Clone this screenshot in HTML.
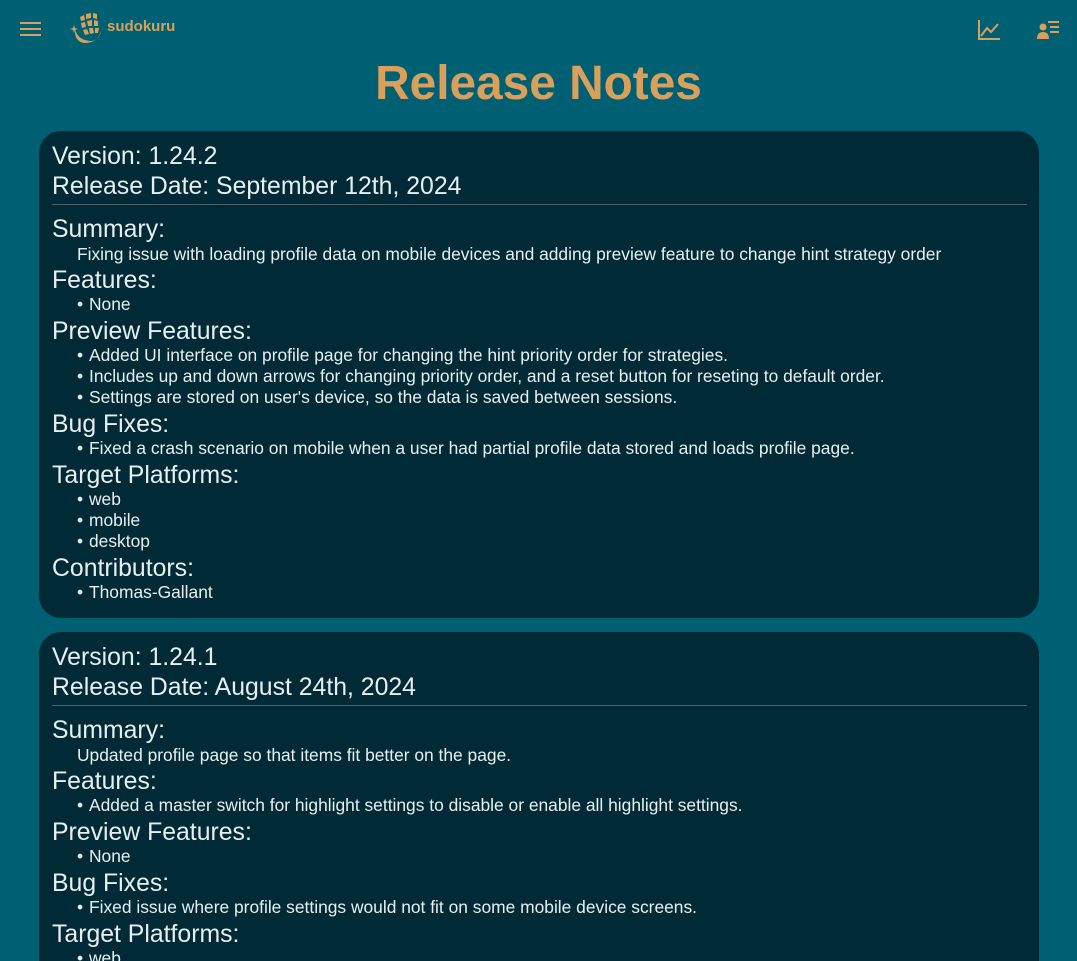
<!DOCTYPE html>
<html><head><meta charset="utf-8"><style>
*{box-sizing:border-box;margin:0;padding:0}
html,body{width:1077px;height:961px;overflow:hidden}
body{background:#006073;font-family:"Liberation Sans",sans-serif;color:#e8eef0;position:relative}
.hdr{position:relative;height:58px}
.t{position:absolute;left:0;right:0;top:56px;text-align:center;color:#d9a05b;font-weight:bold;font-size:47.8px;line-height:56px}
.card{position:absolute;left:39px;width:1000px;background:#002b36;border-radius:22px;padding:11px 12px 14px 13px}
.v{font-size:24.8px;line-height:30px}
.hr{border-top:1px solid #4e6166;margin:2px 0 10px}
.h{font-size:24.8px;line-height:29px;margin-bottom:-1px}
.s{font-size:17.4px;line-height:21px;padding-left:25px;padding-top:1px;margin-bottom:1px}
ul{list-style:none;margin-bottom:2px}
li{font-size:17.4px;line-height:21px;padding-left:37px;position:relative}
li:before{content:"•";position:absolute;left:25px}
</style></head><body>
<div class="hdr">
<svg style="position:absolute;left:20px;top:20px" width="21" height="16" viewBox="0 0 21 16"><rect y="2" width="21" height="2" fill="#d9a05b"/><rect y="8" width="21" height="2" fill="#d9a05b"/><rect y="14" width="21" height="2" fill="#d9a05b"/></svg>
<svg style="position:absolute;left:70px;top:11px" width="34" height="34" viewBox="0 0 34 34" fill="#d9a05b">
<path d="M10 6 L14 4 L15 9 L11 10Z M16 3 L21 2 L21 7 L16 8Z M23 2 L27 3 L27 8 L23 7Z M11 12 L15 11 L16 16 L12 17Z M17 10 L22 9 L22 15 L18 15Z M24 9 L28 10 L28 15 L24 15Z M13 19 L17 18 L19 23 L15 24Z M19 17 L23 17 L24 22 L20 23Z M25 17 L29 17 L28 22 L25 22Z"/>
<path d="M5 18 Q8 30 22 30 Q30 28 31 20 Q28 32 14 32 Q4 30 5 18Z"/>
<path d="M4 14 l1 3 3 1 -3 1 -1 3 -1 -3 -3 -1 3 -1z"/>
</svg>
<div style="position:absolute;left:107px;top:18px;color:#d9a05b;font-weight:bold;font-size:15px">sudokuru</div>
<svg style="position:absolute;left:978px;top:20px" width="22" height="20" viewBox="0 0 22 20" fill="none" stroke="#d9a05b" stroke-width="2"><path d="M1 0V19H22"/><path d="M3 16L9 8L13 12L20 4"/></svg>
<svg style="position:absolute;left:1037px;top:21px" width="23" height="18" viewBox="0 0 23 18" fill="#d9a05b"><circle cx="6" cy="6" r="3.5"/><path d="M0 18Q0 11 6 11Q12 11 12 18Z"/><rect x="11" y="0" width="11" height="2"/><rect x="13" y="5" width="9" height="2"/><rect x="13" y="10" width="9" height="2"/></svg>
</div>
<div class="t">Release Notes</div>
<div class="card" style="top:131px;height:487px">
<div class="v">Version: 1.24.2</div><div class="v">Release Date: September 12th, 2024</div><div class="hr"></div>
<div class="h">Summary:</div><div class="s">Fixing issue with loading profile data on mobile devices and adding preview feature to change hint strategy order</div>
<div class="h">Features:</div><ul><li>None</li></ul>
<div class="h">Preview Features:</div><ul><li>Added UI interface on profile page for changing the hint priority order for strategies.</li><li>Includes up and down arrows for changing priority order, and a reset button for reseting to default order.</li><li>Settings are stored on user's device, so the data is saved between sessions.</li></ul>
<div class="h">Bug Fixes:</div><ul><li>Fixed a crash scenario on mobile when a user had partial profile data stored and loads profile page.</li></ul>
<div class="h">Target Platforms:</div><ul><li>web</li><li>mobile</li><li>desktop</li></ul>
<div class="h">Contributors:</div><ul><li>Thomas-Gallant</li></ul>
</div>
<div class="card" style="top:632px;height:329px;border-radius:22px 22px 0 0">
<div class="v">Version: 1.24.1</div><div class="v">Release Date: August 24th, 2024</div><div class="hr"></div>
<div class="h">Summary:</div><div class="s">Updated profile page so that items fit better on the page.</div>
<div class="h">Features:</div><ul><li>Added a master switch for highlight settings to disable or enable all highlight settings.</li></ul>
<div class="h">Preview Features:</div><ul><li>None</li></ul>
<div class="h">Bug Fixes:</div><ul><li>Fixed issue where profile settings would not fit on some mobile device screens.</li></ul>
<div class="h">Target Platforms:</div><ul><li>web</li><li>mobile</li></ul>
</div>
</body></html>
